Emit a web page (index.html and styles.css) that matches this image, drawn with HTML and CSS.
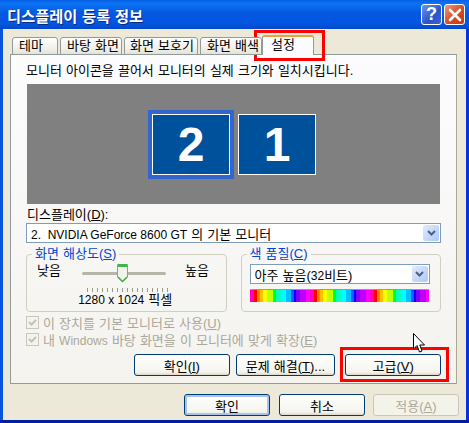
FILE: index.html
```html
<!DOCTYPE html>
<html lang="ko">
<head>
    <meta charset="UTF-8">
    <meta name="viewport" content="width=device-width, initial-scale=1.0">
    <title>디스플레이 등록 정보</title>
    <link rel="stylesheet" href="styles.css">
</head>
<body>
    <div class="window">
        <header class="titlebar">
            <h1>디스플레이 등록 정보</h1>
            <div class="caption-btn help">?</div>
            <div class="caption-btn close">
                <svg width="14" height="14" viewBox="0 0 14 14"><path d="M2 2 L12 12 M12 2 L2 12" stroke="#fff" stroke-width="2.6" stroke-linecap="round"/></svg>
            </div>
        </header>

        <div class="client">
            <nav class="tabs">
                <div class="tab tab-1">테마</div>
                <div class="tab tab-2">바탕 화면</div>
                <div class="tab tab-3">화면 보호기</div>
                <div class="tab tab-4">화면 배색</div>
                <div class="tab tab-active">설정</div>
            </nav>

            <section class="panel">
                <p class="hint">모니터 아이콘을 끌어서 모니터의 실제 크기와 일치시킵니다.</p>

                <div class="monitors">
                    <div class="monitor-selected"><div class="monitor">2</div></div>
                    <div class="monitor">1</div>
                </div>

                <label class="display-label">디스플레이(<u>D</u>):</label>
                <div class="combo">
                    <span><span class="latin">2.&nbsp; NVIDIA GeForce 8600 GT</span> 의 기본 모니터</span>
                    <div class="combo-arrow">
                        <svg width="9" height="7" viewBox="0 0 9 7"><path d="M1 1 L4.5 4.5 L8 1" fill="none" stroke="#4d6185" stroke-width="2"/></svg>
                    </div>
                </div>

                <div class="groups">
                    <fieldset class="group">
                        <legend>화면 해상도(<u>S</u>)</legend>
                        <div class="res-row">
                            <span>낮음</span>
                            <div class="slider">
                                <svg class="thumb" width="11" height="20" viewBox="0 0 11 20">
                                    <path d="M0.5 1.5 H10.5 V14 L5.5 19 L0.5 14 Z" fill="#f3f2ea" stroke="#9a9a8c"/>
                                    <path d="M1 1 H10 V4 H1 Z" fill="#3fb54a"/>
                                    <path d="M1 14 L5.5 18.5 L10 14" fill="none" stroke="#3fb54a" stroke-width="1.5"/>
                                </svg>
                            </div>
                            <span class="res-high">높음</span>
                        </div>
                        <div class="ticks"></div>
                        <div class="res-value"><span class="latin">1280 x 1024</span> 픽셀</div>
                    </fieldset>

                    <fieldset class="group">
                        <legend>색 품질(<u>C</u>)</legend>
                        <div class="combo combo-small">
                            <span>아주 높음(<span class="latin">32</span>비트)</span>
                            <div class="combo-arrow">
                                <svg width="9" height="7" viewBox="0 0 9 7"><path d="M1 1 L4.5 4.5 L8 1" fill="none" stroke="#4d6185" stroke-width="2"/></svg>
                            </div>
                        </div>
                        <div class="color-bar"></div>
                    </fieldset>
                </div>

                <div class="check">
                    <svg width="13" height="13" viewBox="0 0 13 13"><rect x="0.5" y="0.5" width="12" height="12" fill="#f4f3ee" stroke="#c9c7ba"/><path d="M3 6 L5.5 8.5 L10 4" fill="none" stroke="#c4c2b4" stroke-width="2"/></svg>
                    <span>이 장치를 기본 모니터로 사용(<u>U</u>)</span>
                </div>
                <div class="check">
                    <svg width="13" height="13" viewBox="0 0 13 13"><rect x="0.5" y="0.5" width="12" height="12" fill="#f4f3ee" stroke="#c9c7ba"/><path d="M3 6 L5.5 8.5 L10 4" fill="none" stroke="#c4c2b4" stroke-width="2"/></svg>
                    <span>내 <span class="latin">Windows</span> 바탕 화면을 이 모니터에 맞게 확장(<u>E</u>)</span>
                </div>

                <div class="panel-buttons">
                    <button class="btn btn-identify">확인(<u>I</u>)</button>
                    <button class="btn btn-trouble">문제 해결(<u>T</u>)...</button>
                    <button class="btn btn-advanced">고급(<u>V</u>)</button>
                </div>
            </section>

            <footer class="dialog-buttons">
                <button class="btn btn-dialog btn-default">확인</button>
                <button class="btn btn-dialog">취소</button>
                <button class="btn btn-dialog btn-disabled">적용(<u>A</u>)</button>
            </footer>
        </div>

        <!-- red marks from the screenshot, and the mouse pointer -->
        <div class="mark mark-tab"></div>
        <div class="mark mark-advanced"></div>
        <svg class="pointer" width="13" height="22" viewBox="0 0 13 22">
            <path d="M0.5 0.5 V16 L4 12.5 L6.5 19 L9 18 L6.8 12 H11.5 Z" fill="#fff" stroke="#000"/>
        </svg>
    </div>
</body>
</html>
```

FILE: styles.css
```css
* {
    box-sizing: border-box;
}
body {
    margin: 0;
    font-family: "Liberation Sans", "Noto Sans CJK KR", sans-serif;
    font-size: 13px;
    word-spacing: 0.5px;
    color: #000;
    overflow: hidden;
}
.latin {
    font-size: 12px;
    word-spacing: 0;
}
.window {
    position: relative;
    width: 469px;
    height: 423px;
    display: flex;
    flex-direction: column;
    background: linear-gradient(90deg, #0855dd 50%, #0831d9 50%);
    border-bottom: 3px solid #001ea0;
}
.titlebar {
    height: 29px;
    display: flex;
    align-items: center;
    padding: 0 4px 0 7px;
    background: linear-gradient(180deg, #0a5fe6 0%, #0a74f5 12%, #0458e0 45%, #0356e2 80%, #0449c5 100%);
}
.titlebar h1 {
    flex: 1;
    margin: 0;
    font-size: 15.3px;
    font-weight: bold;
    color: #fff;
    text-shadow: 1px 1px 0 #0a2a8a;
}
.caption-btn {
    width: 21px;
    height: 21px;
    margin-left: 2px;
    display: flex;
    align-items: center;
    justify-content: center;
    border: 1px solid #fff;
    border-radius: 3px;
    color: #fff;
    font-size: 18px;
    font-weight: bold;
}
.help {
    background: linear-gradient(135deg, #6f93ea, #2a55c8 60%, #3a63d2);
}
.close {
    background: linear-gradient(135deg, #ec9a80, #d84a22 55%, #c43a10);
}
.client {
    flex: 1;
    margin: 0 3px;
    padding: 6px 7px 0;
    background-color: #ece9d8;
}
.tabs {
    display: flex;
    align-items: flex-end;
    height: 20px;
    padding-left: 2px;
    margin-bottom: -1px;
    position: relative;
    z-index: 1;
}
.tab {
    height: 18px;
    margin-right: 2px;
    padding-left: 6px;
    line-height: 15px;
    white-space: nowrap;
    border: 1px solid #919b9c;
    border-radius: 3px 3px 0 0;
    background: linear-gradient(180deg, #fff, #f0efe6 70%, #e4e2d6);
}
.tab-1 { width: 46px; }
.tab-2 { width: 62px; }
.tab-3 { width: 74px; padding-left: 5px; }
.tab-4 { width: 62px; margin-right: 0; }
.tab-active {
    width: 52px;
    height: 20px;
    margin-right: 0;
    padding-left: 8px;
    background: #fcfcfe;
    border-top: 2px solid #e8a33c;
    border-bottom: none;
}
.panel {
    width: 447px;
    height: 330px;
    padding: 8px 15px 0;
    border: 1px solid #919b9c;
    border-right-color: #aca899;
    background: linear-gradient(180deg, #fcfcfe, #f4f3ee);
}
.hint {
    margin: 0 0 5px;
    height: 16px;
    line-height: 16px;
    white-space: nowrap;
}
.monitors {
    height: 120px;
    display: flex;
    align-items: flex-start;
    gap: 4px;
    padding: 26px 0 0 121px;
    background-color: #808080;
    margin: 0 1px;
}
.monitor-selected {
    border: 4px solid #3366cc;
}
.monitor {
    width: 78px;
    height: 61px;
    display: flex;
    align-items: center;
    justify-content: center;
    background-color: #00519b;
    border: 1px solid #fff;
    color: #fff;
    font-size: 48px;
    font-weight: bold;
}
.monitors > .monitor {
    margin-top: 4px;
}
.display-label {
    display: block;
    height: 19px;
    padding: 3px 0 0 1px;
    line-height: 15px;
}
.combo {
    height: 20px;
    display: flex;
    align-items: center;
    justify-content: space-between;
    padding: 0 1px 0 4px;
    background-color: #fff;
    border: 1px solid #7f9db9;
}
.combo-arrow {
    width: 16px;
    height: 16px;
    display: flex;
    align-items: center;
    justify-content: center;
    border-radius: 2px;
    background: linear-gradient(135deg, #e1eafe, #aec8f7);
}
.groups {
    display: flex;
    gap: 14px;
    margin-top: 4px;
}
.group {
    width: 201px;
    height: 65px;
    margin: 0;
    padding: 0 8px;
    min-width: 0;
    border: 1px solid #d0d0bf;
    border-radius: 4px;
}
.group legend {
    height: 14px;
    line-height: 14px;
    padding: 0 3px;
    margin-left: -3px;
    color: #0046d5;
}
.res-row {
    display: grid;
    grid-template-columns: 45px 84px auto;
    align-items: center;
    height: 20px;
    margin-top: -2px;
    padding-left: 2px;
}
.res-high {
    margin-left: 19px;
}
.slider {
    position: relative;
    height: 3px;
    margin-top: 8px;
    background-color: #b5b5a8;
    border-radius: 2px;
}
.thumb {
    position: absolute;
    left: 35px;
    top: -9px;
}
.ticks {
    width: 81px;
    height: 4px;
    margin: 9px 0 0 52px;
    background: repeating-linear-gradient(90deg, #9a9a8c 0 1px, transparent 1px 5px);
}
.res-value {
    margin-top: 1px;
    text-align: center;
    padding-right: 2px;
    line-height: 14px;
}
.combo-small {
    width: 180px;
    margin-top: 3px;
}
.color-bar {
    width: 179px;
    height: 13px;
    margin-top: 5px;
    border-top: 1px solid #999;
    background: repeating-linear-gradient(90deg,
        #ff00c0 0 4px, #ff0000 4px 7px, #ff8000 7px 10px, #ffc000 10px 13px,
        #ffff00 13px 17px, #c0ff00 17px 23px, #00ff00 23px 26px, #00ffc0 26px 31px,
        #00ffff 31px 36px, #00c0ff 36px 41px, #0060ff 41px 44px, #0000ff 44px 46px,
        #8000ff 46px 50px, #c000ff 50px 56px, #ff00ff 56px 60px);
}
.check {
    display: flex;
    align-items: center;
    gap: 4px;
    height: 13px;
    margin-top: 4px;
    color: #aca899;
    white-space: nowrap;
}
.panel-buttons {
    display: flex;
    margin-top: 8px;
    padding-left: 108px;
}
.btn {
    height: 22px;
    padding: 0;
    font: inherit;
    word-spacing: inherit;
    color: #000;
    border: 1px solid #003c74;
    border-radius: 3px;
    background: linear-gradient(180deg, #fff, #f5f4ee 85%, #dcd8ca);
}
.btn-identify { width: 96px; }
.btn-trouble { width: 100px; margin-left: 6px; }
.btn-advanced { width: 96px; margin-left: 10px; }
.dialog-buttons {
    display: flex;
    gap: 9px;
    padding: 10px 0 0 174px;
}
.btn-dialog {
    width: 86px;
}
.btn-default {
    box-shadow: inset 0 0 0 2px #a8c4ee;
}
.btn-disabled {
    margin-left: -1px;
    color: #aca899;
    border-color: #c9c7ba;
    background: #f4f3ea;
}
.mark {
    position: absolute;
    border: 3px solid #f00;
}
.mark-tab {
    left: 254px;
    top: 30px;
    width: 71px;
    height: 31px;
}
.mark-advanced {
    left: 340px;
    top: 347px;
    width: 109px;
    height: 35px;
}
.pointer {
    position: absolute;
    left: 413px;
    top: 333px;
}
```
